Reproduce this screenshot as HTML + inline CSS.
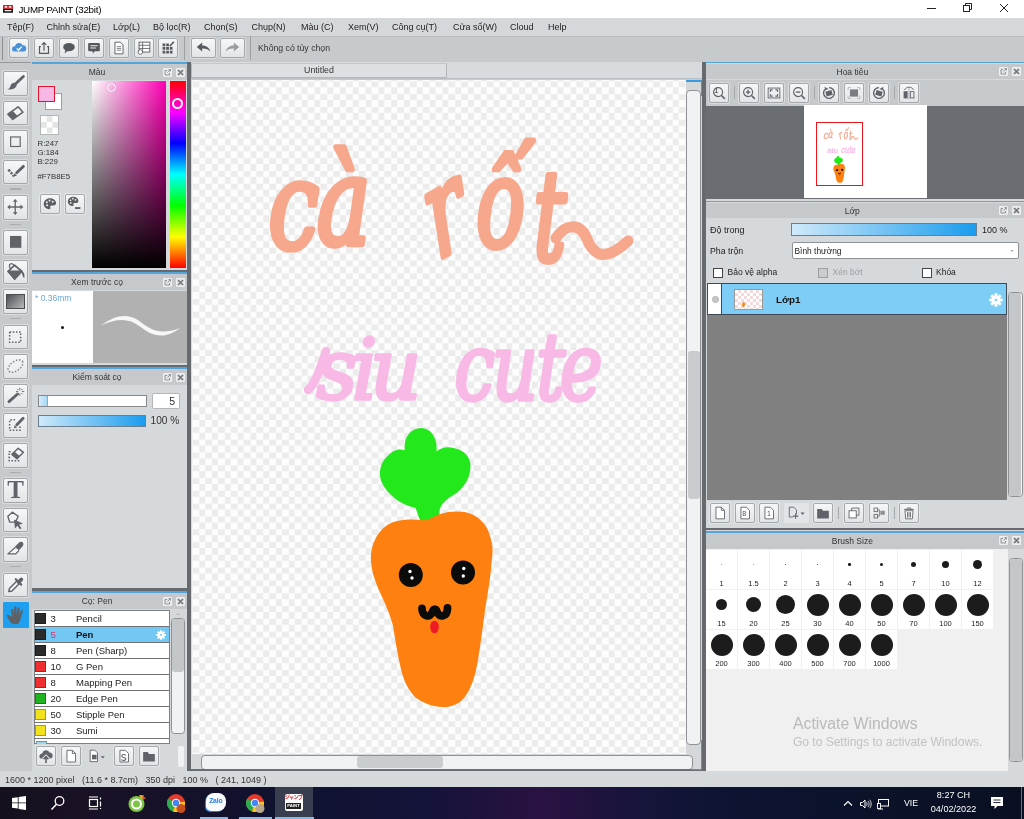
<!DOCTYPE html><html lang="vi"><head><meta charset="utf-8"><title>JUMP PAINT (32bit)</title><style>
*{box-sizing:border-box;margin:0;padding:0}
html,body{width:1024px;height:819px;overflow:hidden;background:#d5d9dc}
body{position:relative;font-family:"Liberation Sans","DejaVu Sans",sans-serif;font-size:9px;color:#222;line-height:1}
#app{position:absolute;left:0;top:0;width:1024px;height:819px;overflow:hidden;background:#d5d9dc;filter:blur(.45px);will-change:transform}
.a{position:absolute}
.t{position:absolute;white-space:nowrap}
.btn{position:absolute;border:1px solid #a4a8ab;border-radius:2px;background:linear-gradient(#f6f7f8,#e2e5e7);box-shadow:0 0 0 1px rgba(255,255,255,.35)}
.btn svg{position:absolute;left:0;top:0;width:100%;height:100%}
.hdr{position:absolute;background:#c5c9cc;height:15.800px}
.hdr .ttl{position:absolute;left:0;right:25px;top:4.300px;text-align:center;font-size:8.500px;color:#333}
.blue{position:absolute;height:1.800px;background:#52a6dc}
.dark{position:absolute;background:#666a6e}
.pi{position:absolute;width:9px;height:9px;border:1px solid #eef0f1;border-radius:1px;background:#e4e7e9}
.sb{position:absolute;border:1px solid #8f9294;border-radius:3.500px;background:#f1f2f3}
.th{position:absolute;border-radius:3px;background:#c3c7ca}
.cb{position:absolute;width:10px;height:10px;border:1.3px solid #444;background:#fff}
</style></head><body><div id="app">
<div class="a" style="left:0;top:0;width:1024px;height:18.400px;background:#fff"></div>
<svg class="a" style="left:3.200px;top:4.800px" width="10" height="7.800" viewBox="0 0 12 10" preserveAspectRatio="none"><rect x="0" y="0" width="12" height="5" fill="#d8202a"/><rect x="0" y="5" width="12" height="5" fill="#1a1a1a"/><rect x="2" y="1.5" width="3" height="2" fill="#fff"/><rect x="7" y="1.5" width="3" height="2" fill="#fff"/><rect x="2" y="6.5" width="8" height="1.5" fill="#fff"/></svg>
<div class="t" style="left:18.500px;top:4.600px;font-size:9.800px;letter-spacing:-.28px;color:#000">JUMP PAINT (32bit)</div>
<svg class="a" style="left:920px;top:-.8px" width="104" height="18" viewBox="0 0 104 18"><g stroke="#222" stroke-width="1" fill="none"><path d="M7 9.5h9"/><rect x="43.5" y="6.5" width="6" height="6"/><path d="M45.500 6.500v-2h6v6h-2"/><path d="M80 5l8 8M88 5l-8 8"/></g></svg>
<div class="a" style="left:0;top:18.400px;width:1024px;height:17.600px;background:#d4d8db"></div>
<div class="t" style="left:7px;top:23.300px;font-size:9px;color:#222">Tệp(F)</div>
<div class="t" style="left:46.6px;top:23.300px;font-size:9px;color:#222">Chỉnh sửa(E)</div>
<div class="t" style="left:113px;top:23.300px;font-size:9px;color:#222">Lớp(L)</div>
<div class="t" style="left:153px;top:23.300px;font-size:9px;color:#222">Bộ lọc(R)</div>
<div class="t" style="left:204px;top:23.300px;font-size:9px;color:#222">Chọn(S)</div>
<div class="t" style="left:251.5px;top:23.300px;font-size:9px;color:#222">Chụp(N)</div>
<div class="t" style="left:301px;top:23.300px;font-size:9px;color:#222">Màu (C)</div>
<div class="t" style="left:348px;top:23.300px;font-size:9px;color:#222">Xem(V)</div>
<div class="t" style="left:392px;top:23.300px;font-size:9px;color:#222">Công cụ(T)</div>
<div class="t" style="left:453px;top:23.300px;font-size:9px;color:#222">Cửa sổ(W)</div>
<div class="t" style="left:510px;top:23.300px;font-size:9px;color:#222">Cloud</div>
<div class="t" style="left:548px;top:23.300px;font-size:9px;color:#222">Help</div>
<div class="a" style="left:0;top:36px;width:1024px;height:26px;background:#c6cacd"></div>
<div class="a" style="left:0;top:36px;width:1024px;height:1px;background:#b9bdc0"></div>
<div class="a" style="left:1.500px;top:37px;width:1.200px;height:23px;background:#8a8e91"></div>
<div class="btn" style="left:9px;top:38px;width:20px;height:20px"><svg viewBox="0 0 20 20"><path d="M5 14a3 3 0 0 1 .5-6a4.500 4.500 0 0 1 8.500-1a3.500 3.500 0 0 1 1 7z" fill="#4a90d9"/><path d="M7.500 10.500l2 2l3.500-4" stroke="#fff" stroke-width="1.600" fill="none"/></svg></div>
<div class="btn" style="left:34px;top:38px;width:20px;height:20px"><svg viewBox="0 0 20 20"><path d="M6.500 8.500h-1.500v7.500h10v-7.500h-1.500" stroke="#555a5e" stroke-width="1.300" fill="none"/><path d="M10 13v-9M7.500 6.500l2.500-2.500l2.500 2.500" stroke="#555a5e" stroke-width="1.300" fill="none"/></svg></div>
<div class="btn" style="left:59px;top:38px;width:20px;height:20px"><svg viewBox="0 0 20 20"><ellipse cx="10" cy="9" rx="6.500" ry="4.500" fill="#555a5e"/><path d="M6 12l-1 4l4-3z" fill="#555a5e"/></svg></div>
<div class="btn" style="left:84px;top:38px;width:20px;height:20px"><svg viewBox="0 0 20 20"><rect x="3.500" y="4.500" width="13" height="9" rx="1" fill="#555a5e"/><path d="M6 7.500h8M6 10h6" stroke="#fff" stroke-width="1"/><path d="M8 13l1 3l2-3z" fill="#555a5e"/></svg></div>
<div class="btn" style="left:109px;top:38px;width:20px;height:20px"><svg viewBox="0 0 20 20"><path d="M5.500 3.500h6l3 3v10h-9z" fill="#fff" stroke="#555a5e" stroke-width="1"/><path d="M7.500 8.500h5M7.500 10.500h5M7.500 12.500h5" stroke="#555a5e" stroke-width=".8"/></svg></div>
<div class="btn" style="left:133.5px;top:38px;width:20px;height:20px"><svg viewBox="0 0 20 20"><rect x="4.500" y="3.500" width="12" height="11" fill="#fff" stroke="#555a5e" stroke-width="1"/><path d="M4.500 7h12M4.500 10.500h12M8.500 3.500v11" stroke="#555a5e" stroke-width=".9"/><circle cx="6" cy="14.500" r="2.500" fill="#fff" stroke="#555a5e" stroke-width=".9"/></svg></div>
<div class="btn" style="left:158px;top:38px;width:20px;height:20px"><svg viewBox="0 0 20 20"><path d="M4 5h3v3h-3zM8 5h3v3h-3zM4 9h3v3h-3zM8 9h3v3h-3zM12 9h3v3h-3zM4 13h3v3h-3zM8 13h3v3h-3zM12 13h3v3h-3z" fill="#555a5e"/><path d="M12 8l4.500-5" stroke="#555a5e" stroke-width="1.800"/></svg></div>
<div class="a" style="left:184px;top:36px;width:1px;height:24px;background:#9da1a4"></div>
<div class="btn" style="left:191px;top:38px;width:25px;height:20px"><svg viewBox="0 0 25 20"><path d="M5 9l6-5v3.200c5 0 8 2.500 9 7c-2-3-5-3.800-9-3.700v3.500z" fill="#555a5e"/></svg></div>
<div class="btn" style="left:220px;top:38px;width:25px;height:20px"><svg viewBox="0 0 25 20"><path d="M20 9l-6-5v3.200c-5 0-8 2.500-9 7c2-3 5-3.800 9-3.700v3.500z" fill="#9a9ea2"/></svg></div>
<div class="a" style="left:250px;top:36px;width:1px;height:24px;background:#9da1a4"></div>
<div class="t" style="left:258px;top:44.300px;font-size:8.700px;color:#333">Không có tùy chọn</div>
<div class="a" style="left:0;top:62px;width:32px;height:709px;background:#c6cacd"></div>
<div class="a" style="left:0;top:62.300px;width:30.500px;height:1.200px;background:#94989b"></div>
<div class="btn" style="left:3px;top:71.0px;width:25px;height:24.500px"><svg viewBox="0 0 25 25"><path d="M21.300 5l-9 8.300" stroke="#60646a" stroke-width="3.200" stroke-linecap="round"/><path d="M11 12l3 3c-1.500 3.500-6 5.200-10.500 4.200c2.500-1 3-2.200 3.500-4c.5-1.800 2-3 4-3.200z" fill="#60646a"/></svg></div>
<div class="btn" style="left:3px;top:100.6px;width:25px;height:24.500px"><svg viewBox="0 0 25 25"><path d="M4 13.500L15.500 5.300L20.800 11.300L9.500 19.300z" fill="#f3f4f5" stroke="#60646a" stroke-width="1.700" stroke-linejoin="round"/><path d="M4 13.500L9.300 9.700L14.800 15.500L9.500 19.300z" fill="#60646a"/></svg></div>
<div class="btn" style="left:3px;top:130.2px;width:25px;height:24.500px"><svg viewBox="0 0 25 25"><rect x="7.100" y="6.600" width="10.600" height="10.600" fill="#eceeef" stroke="#63676b" stroke-width="1.300"/></svg></div>
<div class="btn" style="left:3px;top:159.8px;width:25px;height:24.500px"><svg viewBox="0 0 25 25"><path d="M21.300 6l-7.500 7" stroke="#60646a" stroke-width="3.200" stroke-linecap="round"/><path d="M10.300 17.300l1-3.800l2.800 2.800z" fill="#60646a"/><path d="M3.500 10.500l2-2l2 2l-2 2zM6.300 13.500l1.800-1.800l1.800 1.800l-1.800 1.800zM8.500 16.500l1.500-1.500l1.500 1.500l-1.500 1.500z" fill="#60646a"/></svg></div>
<div class="btn" style="left:3px;top:195.0px;width:25px;height:24.500px"><svg viewBox="0 0 25 25"><path d="M12.200 5v14.500M5 12.200h14.500" stroke="#63676b" stroke-width="1.500"/><path d="M12.200 3.300l-2.700 3.200h5.400zM12.200 21.200l-2.700-3.200h5.400zM3.300 12.200l3.200-2.700v5.400zM21.200 12.200l-3.200-2.700v5.400z" fill="#63676b"/></svg></div>
<div class="btn" style="left:3px;top:230.2px;width:25px;height:24.500px"><svg viewBox="0 0 25 25"><rect x="6.400" y="5.500" width="12.600" height="13.200" fill="#606468"/></svg></div>
<div class="btn" style="left:3px;top:259.8px;width:25px;height:24.500px"><svg viewBox="0 0 25 25"><path d="M3.800 11.500L11.500 4.500L20 11.500L11.500 20.500z" fill="#60646a" stroke="#60646a" stroke-width="1.400" stroke-linejoin="round"/><path d="M6.300 10.500L11.500 6L17 10.500z" fill="#eceeef"/><path d="M7.500 9.500C3 3.500 8 .8 11.500 5.500" stroke="#60646a" stroke-width="1.400" fill="none"/><path d="M19.500 11c2.800 1.200 3.600 5 2.600 7.800c-1.500-1.200-2.400-4-2.600-7.800z" fill="#60646a"/></svg></div>
<div class="btn" style="left:3px;top:289.4px;width:25px;height:24.500px"><div class="a" style="left:2.300px;top:3.600px;width:18.600px;height:14.800px;border:1.200px solid #4a4d50;background:linear-gradient(135deg,#4c4f52,#b9bbbd)"></div></div>
<div class="btn" style="left:3px;top:324.6px;width:25px;height:24.500px"><svg viewBox="0 0 25 25"><rect x="6" y="6.600" width="12.200" height="11.400" fill="#eef0f1" stroke="#60646a" stroke-width="1.700" stroke-dasharray="1.700 1.800"/></svg></div>
<div class="btn" style="left:3px;top:354.2px;width:25px;height:24.500px"><svg viewBox="0 0 25 25"><ellipse cx="12.500" cy="12.300" rx="9.300" ry="5.300" transform="rotate(-35 12.500 12.300)" fill="#eef0f1" stroke="#878b8e" stroke-width="1.700" stroke-dasharray="1.700 1.800"/></svg></div>
<div class="btn" style="left:3px;top:383.8px;width:25px;height:24.500px"><svg viewBox="0 0 25 25"><path d="M5.300 18.500l9.500-8.500" stroke="#60646a" stroke-width="3.200" stroke-linecap="round"/><path d="M17.300 3v3M17.300 9.500v2.500M13 7.300h2.500M19.500 7.300h2.800M14.300 4.300l1.500 1.500M20.500 4.300l-1.500 1.500M20.300 10.300l-1.300-1.300" stroke="#6d7175" stroke-width="1.100"/></svg></div>
<div class="btn" style="left:3px;top:413.4px;width:25px;height:24.500px"><svg viewBox="0 0 25 25"><path d="M12 6.500h-6v11.500h11.500v-5" fill="none" stroke="#60646a" stroke-width="1.700" stroke-dasharray="1.700 1.800"/><path d="M21 4.800l-7 7.200" stroke="#60646a" stroke-width="3.200" stroke-linecap="round"/><path d="M10.800 15.800l.8-3.500l2.700 2.700z" fill="#60646a"/></svg></div>
<div class="btn" style="left:3px;top:443.0px;width:25px;height:24.500px"><svg viewBox="0 0 25 25"><path d="M7 8.500h-1.500v10h12" fill="none" stroke="#60646a" stroke-width="1.700" stroke-dasharray="1.700 1.800"/><path d="M8.500 11.500L15.500 4.800L21.300 9.300L14.300 16.500z" fill="#f3f4f5" stroke="#60646a" stroke-width="1.600" stroke-linejoin="round"/><path d="M8.500 11.500L11.500 8.600L17.300 13.400L14.300 16.500z" fill="#60646a"/></svg></div>
<div class="btn" style="left:3px;top:478.2px;width:25px;height:24.500px"><div class="t" style="left:0;width:23px;top:0px;text-align:center;font-family:'Liberation Serif',serif;font-weight:bold;font-size:25px;color:#60646a;line-height:22.500px">T</div></div>
<div class="btn" style="left:3px;top:507.8px;width:25px;height:24.500px"><svg viewBox="0 0 25 25"><path d="M9 3.500L4 8L6 14.500H12.500L15.500 8z" fill="#f3f4f5" stroke="#60646a" stroke-width="1.500" stroke-linejoin="round"/><path d="M10.800 11.800l10 4.300l-4.300 1.300l2.700 4l-1.800 1.200l-2.700-4l-2.800 3.200z" fill="#60646a"/></svg></div>
<div class="btn" style="left:3px;top:537.4px;width:25px;height:24.500px"><svg viewBox="0 0 25 25"><path d="M19.500 4.300c2 1 2.500 3 1 4.800l-4.500 4.700l-4.500-3.800l4.500-4.500c1.200-1.200 2.400-1.700 3.500-1.200z" fill="#60646a"/><path d="M12.300 10.500l-8.300 7.200h8.800l3.500-3.800" fill="#f3f4f5" stroke="#60646a" stroke-width="1.300" stroke-linejoin="round"/></svg></div>
<div class="btn" style="left:3px;top:572.6px;width:25px;height:24.500px"><svg viewBox="0 0 25 25"><path d="M5 19.500l.8-3.500l8.500-8.500l2.800 2.800l-8.500 8.500z" fill="#f3f4f5" stroke="#60646a" stroke-width="1.600" stroke-linejoin="round"/><path d="M12.800 5.800l6 6" stroke="#60646a" stroke-width="2.400" stroke-linecap="round"/><path d="M16 9l3-3" stroke="#60646a" stroke-width="4.200" stroke-linecap="round"/></svg></div>
<div class="a" style="left:2.500px;top:601.7px;width:26.500px;height:26px;background:#1e9ff0;border-radius:1px"><svg viewBox="0 0 25 25" style="position:absolute;left:1px;top:1px;width:24px;height:24px"><path d="M8.300 14.500l-.8-7c-.2-1.600 1.900-1.900 2.200-.3l.9 4.800l-.1-7.200c0-1.700 2.300-1.700 2.400 0l.3 7l.9-6.200c.3-1.600 2.400-1.300 2.200.3l-.6 6.600l1.900-4.300c.7-1.500 2.600-.7 2 .8l-2.300 6.500c-.4 4.300-2.300 6.700-5.800 6.700c-2.800 0-4.500-1.300-6-4l-2.300-4.200c-.8-1.500 1-2.500 2-1.200z" fill="#5e6165"/></svg></div>
<div class="a" style="left:10px;top:188.4px;width:11px;height:1.200px;background:#a9adb0"></div>
<div class="a" style="left:10px;top:223.6px;width:11px;height:1.200px;background:#a9adb0"></div>
<div class="a" style="left:10px;top:318.0px;width:11px;height:1.200px;background:#a9adb0"></div>
<div class="a" style="left:10px;top:471.6px;width:11px;height:1.200px;background:#a9adb0"></div>
<div class="a" style="left:10px;top:566.0px;width:11px;height:1.200px;background:#a9adb0"></div>
<div class="a" style="left:32px;top:62px;width:155px;height:709px;background:#d5d9dc"></div>
<div class="dark" style="left:187px;top:62px;width:3.600px;height:709px"></div>
<div class="blue" style="left:32px;top:62.0px;width:155px"></div>
<div class="hdr" style="left:32px;top:64.0px;width:155px"><div class="ttl">Màu</div><div class="pi" style="right:15.500px;top:3.500px"><svg viewBox="0 0 9 9" style="position:absolute;left:-1px;top:-1px;width:9px;height:9px"><path d="M4 2.500h-2v4.500h4.500v-2" fill="none" stroke="#8a8e91" stroke-width=".9"/><path d="M4.500 4.500l3-3M5.500 1.500h2v2" fill="none" stroke="#8a8e91" stroke-width=".9"/></svg></div><div class="pi" style="right:2.500px;top:3.500px"><svg viewBox="0 0 9 9" style="position:absolute;left:-1px;top:-1px;width:9px;height:9px"><path d="M2 2l5 5M7 2l-5 5" stroke="#777b7e" stroke-width="1.700"/></svg></div></div>
<div class="a" style="left:45px;top:93px;width:17px;height:16.500px;background:#fff;border:1px solid #9a9ea2"></div>
<div class="a" style="left:38px;top:85.500px;width:16.500px;height:16.500px;background:#f7b8e5;border:1.300px solid #e0142e"></div>
<div class="a" style="left:40px;top:115px;width:19px;height:19.500px;border:1px solid #b3b6b9;background:#fff"><svg viewBox="0 0 17 17" style="position:absolute;left:0;top:0;width:17px;height:17.500px"><path d="M5.700 0h5.700v5.700h-5.700zM0 5.700h5.700v5.700h-5.700zM11.300 5.700h5.700v5.700h-5.700zM5.700 11.300h5.700v5.700h-5.700z" fill="#e3e4e4"/></svg></div>
<div class="t" style="left:37.500px;top:140.3px;font-size:7.800px;color:#333">R:247</div>
<div class="t" style="left:37.500px;top:149.3px;font-size:7.800px;color:#333">G:184</div>
<div class="t" style="left:37.500px;top:158.3px;font-size:7.800px;color:#333">B:229</div>
<div class="t" style="left:37.500px;top:172.500px;font-size:7.800px;color:#333">#F7B8E5</div>
<div class="btn" style="left:40px;top:193.500px;width:20px;height:20px"><svg viewBox="0 0 20 20"><path d="M10 3.500c-4 0-7 2.800-7 6.200c0 3.500 3 6 6 6c1.500 0 1.800-1 1.300-2c-.5-1.200.2-2 1.500-2h2c2 0 3-1 3-2.700c0-3-3-5.500-6.800-5.500z" fill="#5b5f63"/><circle cx="6.500" cy="8" r="1.100" fill="#eee"/><circle cx="9.500" cy="6" r="1.100" fill="#eee"/><circle cx="13" cy="7.500" r="1.100" fill="#eee"/><circle cx="6.800" cy="11.500" r="1.100" fill="#eee"/></svg></div>
<div class="btn" style="left:64.500px;top:193.500px;width:20px;height:20px"><svg viewBox="0 0 20 20"><g transform="translate(-.5 -1) scale(.85)"><path d="M10 3.500c-4 0-7 2.800-7 6.200c0 3.500 3 6 6 6c1.500 0 1.800-1 1.300-2c-.5-1.200.2-2 1.500-2h2c2 0 3-1 3-2.700c0-3-3-5.500-6.800-5.500z" fill="#5b5f63"/><circle cx="6.500" cy="8" r="1.100" fill="#eee"/><circle cx="9.500" cy="6" r="1.100" fill="#eee"/><circle cx="13" cy="7.500" r="1.100" fill="#eee"/><circle cx="6.800" cy="11.500" r="1.100" fill="#eee"/></g><rect x="10" y="13.500" width="6" height="2" fill="#5b5f63"/></svg></div>
<div class="a" style="left:92px;top:80.500px;width:74px;height:187.500px;background:linear-gradient(to bottom,rgba(0,0,0,0),#000),linear-gradient(to right,#fff,#ff00b4)"></div>
<div class="a" style="left:106.500px;top:82.500px;width:9px;height:9px;border-radius:50%;border:1.600px solid #fff;box-shadow:0 0 1px rgba(0,0,0,.35)"></div>
<div class="a" style="left:170px;top:80.500px;width:15.500px;height:187.500px;background:linear-gradient(to bottom,#ff0000 0%,#ff00ff 16.6%,#0000ff 33.300%,#00ffff 50%,#00ff00 66.600%,#ffff00 83.300%,#ff0000 100%)"></div>
<div class="a" style="left:172.200px;top:97.500px;width:11px;height:11px;border-radius:50%;border:2px solid #fff"></div>
<div class="dark" style="left:32px;top:269.500px;width:155px;height:2.500px"></div>
<div class="blue" style="left:32px;top:272.0px;width:155px"></div>
<div class="hdr" style="left:32px;top:274.0px;width:155px"><div class="ttl">Xem trước cọ</div><div class="pi" style="right:15.500px;top:3.500px"><svg viewBox="0 0 9 9" style="position:absolute;left:-1px;top:-1px;width:9px;height:9px"><path d="M4 2.500h-2v4.500h4.500v-2" fill="none" stroke="#8a8e91" stroke-width=".9"/><path d="M4.500 4.500l3-3M5.500 1.500h2v2" fill="none" stroke="#8a8e91" stroke-width=".9"/></svg></div><div class="pi" style="right:2.500px;top:3.500px"><svg viewBox="0 0 9 9" style="position:absolute;left:-1px;top:-1px;width:9px;height:9px"><path d="M2 2l5 5M7 2l-5 5" stroke="#777b7e" stroke-width="1.700"/></svg></div></div>
<div class="a" style="left:32px;top:290.500px;width:61px;height:72px;background:#fff"></div>
<div class="a" style="left:93px;top:290.500px;width:94px;height:72px;background:#b1b1b1"></div>
<div class="t" style="left:35px;top:293.500px;font-size:8.500px;color:#6aa6d6">* 0.36mm</div>
<div class="a" style="left:60.800px;top:325.500px;width:3px;height:3px;border-radius:50%;background:#111"></div>
<svg class="a" style="left:93px;top:290.500px" width="94" height="72" viewBox="0 0 94 72"><path d="M8 34.500C22 24 34 22.500 44 28.500C55 36 64 46 87 37C70 50 58 44 47 35.500C36 27 24 27 8 34.500z" fill="#f7f7f7"/></svg>
<div class="dark" style="left:32px;top:364.500px;width:155px;height:2.500px"></div>
<div class="blue" style="left:32px;top:367.0px;width:155px"></div>
<div class="hdr" style="left:32px;top:369.0px;width:155px"><div class="ttl">Kiểm soát cọ</div><div class="pi" style="right:15.500px;top:3.500px"><svg viewBox="0 0 9 9" style="position:absolute;left:-1px;top:-1px;width:9px;height:9px"><path d="M4 2.500h-2v4.500h4.500v-2" fill="none" stroke="#8a8e91" stroke-width=".9"/><path d="M4.500 4.500l3-3M5.500 1.500h2v2" fill="none" stroke="#8a8e91" stroke-width=".9"/></svg></div><div class="pi" style="right:2.500px;top:3.500px"><svg viewBox="0 0 9 9" style="position:absolute;left:-1px;top:-1px;width:9px;height:9px"><path d="M2 2l5 5M7 2l-5 5" stroke="#777b7e" stroke-width="1.700"/></svg></div></div>
<div class="a" style="left:38px;top:394.500px;width:109px;height:12.500px;background:#fff;border:1px solid #85898c"><div class="a" style="left:0;top:0;width:8.500px;height:10.500px;background:linear-gradient(to right,#d6ecfb,#a8d6f5);border-right:1px solid #6db3e4"></div></div>
<div class="a" style="left:152px;top:392.500px;width:27.500px;height:16.500px;background:#fff;border:1px solid #b4b8bb;border-radius:2px"></div>
<div class="t" style="left:152px;width:23px;top:395.500px;text-align:right;font-size:10.500px;color:#333">5</div>
<div class="a" style="left:38px;top:414.500px;width:107.500px;height:12.500px;background:linear-gradient(to right,#cfe9fa,#1a9cee);border:1px solid #6a7f90"></div>
<div class="t" style="left:150.500px;top:415.500px;font-size:10.200px;color:#333">100 %</div>
<div class="dark" style="left:32px;top:588px;width:155px;height:2.500px"></div>
<div class="blue" style="left:32px;top:591.0px;width:155px"></div>
<div class="hdr" style="left:32px;top:593.0px;width:155px"><div class="ttl">Cọ: Pen</div><div class="pi" style="right:15.500px;top:3.500px"><svg viewBox="0 0 9 9" style="position:absolute;left:-1px;top:-1px;width:9px;height:9px"><path d="M4 2.500h-2v4.500h4.500v-2" fill="none" stroke="#8a8e91" stroke-width=".9"/><path d="M4.500 4.500l3-3M5.500 1.500h2v2" fill="none" stroke="#8a8e91" stroke-width=".9"/></svg></div><div class="pi" style="right:2.500px;top:3.500px"><svg viewBox="0 0 9 9" style="position:absolute;left:-1px;top:-1px;width:9px;height:9px"><path d="M2 2l5 5M7 2l-5 5" stroke="#777b7e" stroke-width="1.700"/></svg></div></div>
<div class="a" style="left:33.500px;top:610px;width:136px;height:134px;background:#fff;border:1px solid #7d8184;overflow:hidden"></div>
<div class="a" style="left:34.500px;top:626.0px;width:134px;height:1px;background:#6f7376"></div>
<div class="a" style="left:35px;top:613.0px;width:11px;height:11px;background:#2b2b2b;border:1px solid rgba(0,0,0,.3)"></div>
<div class="t" style="left:50.500px;top:613.8px;font-size:9.500px;color:#222">3</div>
<div class="t" style="left:76px;top:613.8px;font-size:9.500px;color:#222">Pencil</div>
<div class="a" style="left:34.500px;top:626.5px;width:134px;height:16px;background:#72c8f3"></div>
<div class="a" style="left:34.500px;top:642.0px;width:134px;height:1px;background:#6f7376"></div>
<div class="a" style="left:35px;top:629.0px;width:11px;height:11px;background:#2b2b2b;border:1px solid rgba(0,0,0,.3)"></div>
<div class="t" style="left:50.500px;top:629.8px;font-size:9.500px;color:#e0306a">5</div>
<div class="t" style="left:76px;top:629.8px;font-size:9.500px;font-weight:bold;color:#111">Pen</div>
<div class="a" style="left:34.500px;top:658.0px;width:134px;height:1px;background:#6f7376"></div>
<div class="a" style="left:35px;top:645.0px;width:11px;height:11px;background:#2b2b2b;border:1px solid rgba(0,0,0,.3)"></div>
<div class="t" style="left:50.500px;top:645.8px;font-size:9.500px;color:#222">8</div>
<div class="t" style="left:76px;top:645.8px;font-size:9.500px;color:#222">Pen (Sharp)</div>
<div class="a" style="left:34.500px;top:674.0px;width:134px;height:1px;background:#6f7376"></div>
<div class="a" style="left:35px;top:661.0px;width:11px;height:11px;background:#f03030;border:1px solid rgba(0,0,0,.3)"></div>
<div class="t" style="left:50.500px;top:661.8px;font-size:9.500px;color:#222">10</div>
<div class="t" style="left:76px;top:661.8px;font-size:9.500px;color:#222">G Pen</div>
<div class="a" style="left:34.500px;top:690.0px;width:134px;height:1px;background:#6f7376"></div>
<div class="a" style="left:35px;top:677.0px;width:11px;height:11px;background:#f03030;border:1px solid rgba(0,0,0,.3)"></div>
<div class="t" style="left:50.500px;top:677.8px;font-size:9.500px;color:#222">8</div>
<div class="t" style="left:76px;top:677.8px;font-size:9.500px;color:#222">Mapping Pen</div>
<div class="a" style="left:34.500px;top:706.0px;width:134px;height:1px;background:#6f7376"></div>
<div class="a" style="left:35px;top:693.0px;width:11px;height:11px;background:#1fb41f;border:1px solid rgba(0,0,0,.3)"></div>
<div class="t" style="left:50.500px;top:693.8px;font-size:9.500px;color:#222">20</div>
<div class="t" style="left:76px;top:693.8px;font-size:9.500px;color:#222">Edge Pen</div>
<div class="a" style="left:34.500px;top:722.0px;width:134px;height:1px;background:#6f7376"></div>
<div class="a" style="left:35px;top:709.0px;width:11px;height:11px;background:#f2e21e;border:1px solid rgba(0,0,0,.3)"></div>
<div class="t" style="left:50.500px;top:709.8px;font-size:9.500px;color:#222">50</div>
<div class="t" style="left:76px;top:709.8px;font-size:9.500px;color:#222">Stipple Pen</div>
<div class="a" style="left:34.500px;top:738.0px;width:134px;height:1px;background:#6f7376"></div>
<div class="a" style="left:35px;top:725.0px;width:11px;height:11px;background:#f2e21e;border:1px solid rgba(0,0,0,.3)"></div>
<div class="t" style="left:50.500px;top:725.8px;font-size:9.500px;color:#222">30</div>
<div class="t" style="left:76px;top:725.8px;font-size:9.500px;color:#222">Sumi</div>
<div class="a" style="left:35.500px;top:740.500px;width:11px;height:3px;background:#9fd8ea;border:1px solid rgba(0,0,0,.3);border-bottom:0"></div>
<svg class="a" style="left:156px;top:629.500px" width="10" height="10" viewBox="0 0 12 12"><g fill="#fff"><circle cx="6" cy="6" r="3.600"/><rect x="4.700" y="0.200" width="2.600" height="3.200" rx=".7" transform="rotate(0 6 6)"/><rect x="4.700" y="0.200" width="2.600" height="3.200" rx=".7" transform="rotate(45 6 6)"/><rect x="4.700" y="0.200" width="2.600" height="3.200" rx=".7" transform="rotate(90 6 6)"/><rect x="4.700" y="0.200" width="2.600" height="3.200" rx=".7" transform="rotate(135 6 6)"/><rect x="4.700" y="0.200" width="2.600" height="3.200" rx=".7" transform="rotate(180 6 6)"/><rect x="4.700" y="0.200" width="2.600" height="3.200" rx=".7" transform="rotate(225 6 6)"/><rect x="4.700" y="0.200" width="2.600" height="3.200" rx=".7" transform="rotate(270 6 6)"/><rect x="4.700" y="0.200" width="2.600" height="3.200" rx=".7" transform="rotate(315 6 6)"/></g><circle cx="6" cy="6" r="1.100" fill="#72c8f3"/></svg>
<div class="sb" style="left:170.500px;top:617.500px;width:14.500px;height:116px"></div>
<div class="th" style="left:171.500px;top:618.500px;width:12.500px;height:53px"></div>
<div class="a" style="left:175.500px;top:612.500px;width:0;height:0;border-left:2.200px solid transparent;border-right:2.200px solid transparent;border-bottom:2.800px solid #b9bdc0"></div>
<div class="btn" style="left:36px;top:746px;width:20px;height:20.300px;"><svg viewBox="0 0 20 20"><path d="M5.500 13a3 3 0 0 1 .3-6a4.200 4.200 0 0 1 8-1a3.200 3.200 0 0 1 .7 6.500z" fill="#60646a"/><path d="M10 17.500v-6.500M6.800 13.500l3.200-3.200l3.200 3.200" stroke="#e9ebec" stroke-width="3.600" fill="none"/><path d="M10 17.500v-6.500M7.300 13.300l2.700-2.800l2.700 2.800" stroke="#60646a" stroke-width="1.800" fill="none"/></svg></div>
<div class="btn" style="left:60.5px;top:746px;width:20px;height:20.300px;"><svg viewBox="0 0 20 20"><path d="M5.500 3.500h6l3.500 3.500v9.500h-9.500z" fill="#fff" stroke="#60646a" stroke-width="1"/><path d="M11.500 3.500v3.500h3.500" fill="none" stroke="#60646a" stroke-width="1"/></svg></div>
<div class="btn" style="left:85px;top:746px;width:25px;height:20.300px;border-color:transparent;background:none;box-shadow:none;"><svg viewBox="0 0 25 20"><path d="M4.500 3.500h5l3 3v9.500h-8z" fill="#fff" stroke="#60646a" stroke-width="1"/><rect x="6.500" y="8.500" width="5" height="5" fill="#60646a"/><path d="M16 10h4.500l-2.250 2.700z" fill="#60646a"/></svg></div>
<div class="btn" style="left:114px;top:746px;width:20px;height:20.300px;"><svg viewBox="0 0 20 20"><path d="M5.500 3.500h6l3.500 3.500v9.500h-9.500z" fill="#fff" stroke="#60646a" stroke-width="1"/><path d="M12 9c-2-1.500-4.500-.8-4.500 1s4.500 1 4.500 3s-3 2.300-5 .8" fill="none" stroke="#60646a" stroke-width="1.200"/></svg></div>
<div class="btn" style="left:138.5px;top:746px;width:20px;height:20.300px;"><svg viewBox="0 0 20 20"><path d="M3.500 5.500h5l1.500 2h6.500v8.500h-13z" fill="#60646a"/></svg></div>
<div class="a" style="left:177.500px;top:745.500px;width:6.500px;height:21px;background:#f1f2f3;border-radius:2px"></div>
<div class="a" style="left:190.600px;top:62px;width:511px;height:709px;background:#d7dbde"></div>
<div class="a" style="left:191px;top:62.500px;width:256px;height:15px;background:#dde0e3;border:1px solid #b4b8bb;border-top-color:#c5c8cb;border-radius:1px"></div>
<div class="t" style="left:191px;width:256px;top:66px;text-align:center;font-size:8.800px;color:#333">Untitled</div>
<div class="a" style="left:190.600px;top:77.500px;width:511px;height:2.500px;background:linear-gradient(#b4b8bc,#cdd1d4)"></div>
<div class="a" id="cv" style="left:191.600px;top:80.300px;width:494px;height:673.500px;background-color:#fdfdfd;background-image:conic-gradient(#ececec 25%,#fdfdfd 0 50%,#ececec 0 75%,#fdfdfd 0);background-size:12.800px 12.800px;background-position:0.400px -5.500px"></div>
<svg class="a" style="left:0;top:0" width="1024" height="819" viewBox="0 0 1024 819"><g font-family="'DejaVu Serif Condensed','DejaVu Serif',serif" font-style="italic" font-size="100" stroke-linejoin="round" stroke-linecap="round" style="paint-order:stroke">
<g fill="#f6a78c" stroke="#f6a78c"><text transform="scale(1.0 1.22)" x="268.5 317.0" y="203.1 199.8" stroke-width="5.2" vector-effect="non-scaling-stroke">cà</text> <text transform="scale(0.9 1.25)" x="486.2 529.2 592.7" y="208.0 197.6 208.0" rotate="-22 0 0" stroke-width="5.2" vector-effect="non-scaling-stroke">rốt</text></g>
<path d="M556 238C565 224 580 222 587 239S605 262 628 241" fill="none" stroke="#f6a78c" stroke-width="11"/>
<g fill="#f8b9e6" stroke="#f8b9e6"><text transform="scale(0.88 0.85)" x="359.8 400.0 420.7" y="469.4 469.4 469.4" stroke-width="3.4" vector-effect="non-scaling-stroke">siu</text> <text transform="scale(0.8 0.93)" x="568.2 614.6 670.4 700.1" y="430.1 430.1 430.6 430.6" stroke-width="3.4" vector-effect="non-scaling-stroke">cute</text></g>
<path d="M308 390C315 384 320 370 326 351" fill="none" stroke="#f8b9e6" stroke-width="8.5"/>
</g>
<path d="M421 522C418 516 417 511 415.500 508C402 505 388 496 381.500 482C378 472 380 460 393 451.500C397 449 401 449 405 450C403 440 409 428.500 421 428C432 428 438 440 436.500 451.500C442 447 448 446.500 453.500 448C464 450 471 457 470.500 467C470 480 462 490 453.500 495C448 498 443 502 440 508C439 513 439 518 440 523z" fill="#22e81c"/>
<path d="M371 561C370 545 378 530 389 524C399 519 412 519 421 520C428 521 434 516 440 514C449 511 457 511 465 512C478 515 487 524 490 536C493 545 493 552 492 558C491 575 488 592 485.500 607C483 625 481 642 478 660C475 678 470 693 461 701C455 706 448 707.500 442 707C432 706.500 423 703 415.500 697.500C408 690 403 679 400.500 667C397 652 395 638 393 625.500C389 611 383 599 378 588C374 578 371.500 570 371 561z" fill="#fd8010"/>
<circle cx="410.8" cy="575" r="12" fill="#0b0b0b"/>
<circle cx="463" cy="572.6" r="12" fill="#0b0b0b"/>
<circle cx="410" cy="571.5" r="1.700" fill="#fff"/>
<circle cx="412" cy="578" r="1.700" fill="#fff"/>
<circle cx="463.8" cy="568.5" r="1.700" fill="#fff"/>
<circle cx="463.3" cy="576" r="1.700" fill="#fff"/>
<path d="M422 608.500C422 617 430.500 618.500 432.500 611.500C433.500 609 436 609 437 611.500C439 618.500 447.500 617 447.500 608" fill="none" stroke="#0b0b0b" stroke-width="7.800" stroke-linecap="round" stroke-linejoin="round"/>
<ellipse cx="434.800" cy="609.500" rx="5" ry="4" fill="#0b0b0b"/>
<ellipse cx="434.500" cy="627" rx="4.300" ry="6.300" fill="#ee1d25"/></svg>
<div class="a" style="left:685.600px;top:80.300px;width:16px;height:690px;background:#d4d8db"></div>
<div class="a" style="left:191.600px;top:753.800px;width:510px;height:17px;background:#d4d8db"></div>
<div class="sb" style="left:686px;top:89.500px;width:15px;height:655px;border-radius:4px"></div>
<div class="th" style="left:687.500px;top:350.500px;width:12px;height:148px;background:#c9cdd0"></div>
<div class="sb" style="left:200.500px;top:754.500px;width:492px;height:15px;border-radius:4px"></div>
<div class="th" style="left:356.500px;top:756px;width:86px;height:12px;background:#c9cdd0"></div>
<div class="a" style="left:190.600px;top:769.300px;width:511px;height:1.500px;background:#6a6e72"></div>
<div class="a" style="left:686px;top:80.300px;width:16px;height:1.300px;background:#3a9be0"></div>
<div class="a" style="left:700.800px;top:80.300px;width:1.300px;height:16px;background:#3a9be0"></div>
<div class="a" style="left:700.800px;top:740px;width:1.300px;height:30px;background:#3a9be0"></div>
<div class="a" style="left:690px;top:768.500px;width:12px;height:1.300px;background:#3a9be0"></div>
<div class="dark" style="left:701.800px;top:62px;width:3.900px;height:709px"></div>
<div class="a" style="left:705.7px;top:62px;width:318.29999999999995px;height:709px;background:#d5d9dc"></div>
<div class="blue" style="left:705.7px;top:61.5px;width:318.29999999999995px"></div>
<div class="hdr" style="left:705.7px;top:63.5px;width:318.29999999999995px"><div class="ttl">Hoa tiêu</div><div class="pi" style="right:15.500px;top:3.500px"><svg viewBox="0 0 9 9" style="position:absolute;left:-1px;top:-1px;width:9px;height:9px"><path d="M4 2.500h-2v4.500h4.500v-2" fill="none" stroke="#8a8e91" stroke-width=".9"/><path d="M4.500 4.500l3-3M5.500 1.500h2v2" fill="none" stroke="#8a8e91" stroke-width=".9"/></svg></div><div class="pi" style="right:2.500px;top:3.500px"><svg viewBox="0 0 9 9" style="position:absolute;left:-1px;top:-1px;width:9px;height:9px"><path d="M2 2l5 5M7 2l-5 5" stroke="#777b7e" stroke-width="1.700"/></svg></div></div>
<div class="a" style="left:705.7px;top:80px;width:318.29999999999995px;height:25.500px;background:#c5c9cc"></div>
<div class="btn" style="left:708.7px;top:82.500px;width:20px;height:20px"><svg viewBox="0 0 20 20"><circle cx="9" cy="9" r="5" fill="none" stroke="#60646a" stroke-width="1.300"/><path d="M12.500 12.500l4 4" stroke="#60646a" stroke-width="1.800"/></svg></div>
<div class="btn" style="left:739px;top:82.500px;width:20px;height:20px"><svg viewBox="0 0 20 20"><circle cx="9" cy="9" r="5" fill="none" stroke="#60646a" stroke-width="1.300"/><path d="M12.500 12.500l4 4" stroke="#60646a" stroke-width="1.800"/><path d="M6.500 9h5M9 6.500v5" stroke="#60646a" stroke-width="1.500"/></svg></div>
<div class="btn" style="left:764px;top:82.500px;width:20px;height:20px"><svg viewBox="0 0 20 20"><rect x="3.500" y="4.500" width="13" height="11" fill="none" stroke="#60646a" stroke-width="1"/><path d="M6 9v-2.500h2.500M11.500 6.500h2.500v2.500M14 11v2.500h-2.500M8.500 13.500h-2.500v-2.500" fill="none" stroke="#60646a" stroke-width="1.200"/></svg></div>
<div class="btn" style="left:788.5px;top:82.500px;width:20px;height:20px"><svg viewBox="0 0 20 20"><circle cx="9" cy="9" r="5" fill="none" stroke="#60646a" stroke-width="1.300"/><path d="M12.500 12.500l4 4" stroke="#60646a" stroke-width="1.800"/><path d="M6.500 9h5" stroke="#60646a" stroke-width="1.500"/></svg></div>
<div class="btn" style="left:819px;top:82.500px;width:20px;height:20px"><svg viewBox="0 0 20 20"><path d="M6 5.500a6 6 0 1 0 4-1.500" fill="none" stroke="#60646a" stroke-width="1.500"/><path d="M5 3l1 4l3.500-1.500z" fill="#60646a"/><rect x="6.500" y="7.500" width="7" height="5.500" fill="#60646a" transform="rotate(-15 10 10)"/></svg></div>
<div class="btn" style="left:844px;top:82.500px;width:20px;height:20px"><svg viewBox="0 0 20 20"><rect x="5.500" y="6" width="9" height="8" fill="#7a7e82"/><path d="M3.500 7v-3h3M13.500 4h3v3M16.500 13v3h-3M6.500 16h-3v-3" fill="none" stroke="#b0b3b6" stroke-width="1"/></svg></div>
<div class="btn" style="left:869px;top:82.500px;width:20px;height:20px"><svg viewBox="0 0 20 20"><path d="M14 5.500a6 6 0 1 1-4-1.500" fill="none" stroke="#60646a" stroke-width="1.500"/><path d="M15 3l-1 4l-3.500-1.500z" fill="#60646a"/><rect x="6.500" y="7.500" width="7" height="5.500" fill="#60646a" transform="rotate(15 10 10)"/></svg></div>
<div class="btn" style="left:899px;top:82.500px;width:20px;height:20px"><svg viewBox="0 0 20 20"><rect x="4" y="8" width="4.500" height="8" fill="#60646a"/><rect x="11.500" y="8.500" width="4" height="7" fill="none" stroke="#60646a" stroke-width="1"/><path d="M10 5v12" stroke="#60646a" stroke-width=".8" stroke-dasharray="1.500 1"/><path d="M5 6.500c2-4 8-4 10 0" fill="none" stroke="#60646a" stroke-width="1.100"/></svg></div>
<div class="t" style="left:714.300px;top:87.300px;font-size:7px;font-weight:bold;color:#5b5f63">1</div>
<div class="a" style="left:733.7px;top:86px;width:1px;height:13px;background:#a4a8ab"></div>
<div class="a" style="left:813.7px;top:86px;width:1px;height:13px;background:#a4a8ab"></div>
<div class="a" style="left:894px;top:86px;width:1px;height:13px;background:#a4a8ab"></div>
<div class="a" style="left:705.7px;top:105.500px;width:318.29999999999995px;height:93.500px;background:#6a6e73"></div>
<div class="a" style="left:804px;top:105.200px;width:122.500px;height:93px;background:#fff"></div>
<svg class="a" style="left:0;top:0" width="1024" height="819" viewBox="0 0 1024 819"><g transform="translate(797.58 114.78) scale(0.0962)"><g font-family="'DejaVu Serif Condensed','DejaVu Serif',serif" font-style="italic" font-size="100" stroke-linejoin="round" stroke-linecap="round" style="paint-order:stroke">
<g fill="#f6a78c" stroke="#f6a78c"><text transform="scale(1.0 1.22)" x="268.5 317.0" y="203.1 199.8" stroke-width="0.3" vector-effect="non-scaling-stroke">cà</text> <text transform="scale(0.9 1.25)" x="486.2 529.2 592.7" y="208.0 197.6 208.0" rotate="-22 0 0" stroke-width="0.3" vector-effect="non-scaling-stroke">rốt</text></g>
<path d="M556 238C565 224 580 222 587 239S605 262 628 241" fill="none" stroke="#f6a78c" stroke-width="11"/>
<g fill="#f8b9e6" stroke="#f8b9e6"><text transform="scale(0.88 0.85)" x="359.8 400.0 420.7" y="469.4 469.4 469.4" stroke-width="0.25" vector-effect="non-scaling-stroke">siu</text> <text transform="scale(0.8 0.93)" x="568.2 614.6 670.4 700.1" y="430.1 430.1 430.6 430.6" stroke-width="0.25" vector-effect="non-scaling-stroke">cute</text></g>
<path d="M308 390C315 384 320 370 326 351" fill="none" stroke="#f8b9e6" stroke-width="9"/>
</g>
<path d="M421 522C418 516 417 511 415.500 508C402 505 388 496 381.500 482C378 472 380 460 393 451.500C397 449 401 449 405 450C403 440 409 428.500 421 428C432 428 438 440 436.500 451.500C442 447 448 446.500 453.500 448C464 450 471 457 470.500 467C470 480 462 490 453.500 495C448 498 443 502 440 508C439 513 439 518 440 523z" fill="#22e81c"/>
<path d="M371 561C370 545 378 530 389 524C399 519 412 519 421 520C428 521 434 516 440 514C449 511 457 511 465 512C478 515 487 524 490 536C493 545 493 552 492 558C491 575 488 592 485.500 607C483 625 481 642 478 660C475 678 470 693 461 701C455 706 448 707.500 442 707C432 706.500 423 703 415.500 697.500C408 690 403 679 400.500 667C397 652 395 638 393 625.500C389 611 383 599 378 588C374 578 371.500 570 371 561z" fill="#fd8010"/>
<circle cx="410.8" cy="575" r="12" fill="#0b0b0b"/>
<circle cx="463" cy="572.6" r="12" fill="#0b0b0b"/>
<circle cx="410" cy="571.5" r="1.700" fill="#fff"/>
<circle cx="412" cy="578" r="1.700" fill="#fff"/>
<circle cx="463.8" cy="568.5" r="1.700" fill="#fff"/>
<circle cx="463.3" cy="576" r="1.700" fill="#fff"/>
<path d="M422 608.500C422 617 430.500 618.500 432.500 611.500C433.500 609 436 609 437 611.500C439 618.500 447.500 617 447.500 608" fill="none" stroke="#0b0b0b" stroke-width="7.800" stroke-linecap="round" stroke-linejoin="round"/>
<ellipse cx="434.800" cy="609.500" rx="5" ry="4" fill="#0b0b0b"/>
<ellipse cx="434.500" cy="627" rx="4.300" ry="6.300" fill="#ee1d25"/></g></svg>
<div class="a" style="left:816px;top:122.200px;width:47.200px;height:63.800px;border:1.700px solid #ee1418"></div>
<div class="blue" style="left:705.7px;top:200.7px;width:318.29999999999995px"></div>
<div class="hdr" style="left:705.7px;top:202.7px;width:318.29999999999995px"><div class="ttl">Lớp</div><div class="pi" style="right:15.500px;top:3.500px"><svg viewBox="0 0 9 9" style="position:absolute;left:-1px;top:-1px;width:9px;height:9px"><path d="M4 2.500h-2v4.500h4.500v-2" fill="none" stroke="#8a8e91" stroke-width=".9"/><path d="M4.500 4.500l3-3M5.500 1.500h2v2" fill="none" stroke="#8a8e91" stroke-width=".9"/></svg></div><div class="pi" style="right:2.500px;top:3.500px"><svg viewBox="0 0 9 9" style="position:absolute;left:-1px;top:-1px;width:9px;height:9px"><path d="M2 2l5 5M7 2l-5 5" stroke="#777b7e" stroke-width="1.700"/></svg></div></div>
<div class="t" style="left:710px;top:226px;font-size:9px;color:#222">Độ trong</div>
<div class="a" style="left:790.500px;top:223px;width:186.500px;height:13px;background:linear-gradient(to right,#cfe9fa,#1a9cee);border:1px solid #6a7f90"></div>
<div class="t" style="left:982px;top:226px;font-size:9px;color:#222">100 %</div>
<div class="t" style="left:710px;top:246.500px;font-size:8.800px;color:#222">Pha trộn</div>
<div class="a" style="left:791.500px;top:241.500px;width:227px;height:17.500px;background:#fff;border:1px solid #8e9295;border-radius:2px"></div>
<div class="t" style="left:794.500px;top:246.800px;font-size:8.400px;color:#222">Bình thường</div>
<div class="a" style="left:1009.500px;top:249.500px;width:0;height:0;border-left:2.500px solid transparent;border-right:2.500px solid transparent;border-top:2.500px solid #b0b4b7"></div>
<div class="cb" style="left:713px;top:267.500px"></div><div class="t" style="left:727.500px;top:268.300px;font-size:8.500px;color:#222">Bảo vệ alpha</div>
<div class="cb" style="left:818px;top:267.500px;border-color:#9a9ea1;background:#c9cdd0"></div><div class="t" style="left:832.500px;top:268.300px;font-size:8.500px;color:#9a9ea1">Xén bớt</div>
<div class="cb" style="left:922px;top:267.500px"></div><div class="t" style="left:936px;top:268.300px;font-size:8.500px;color:#222">Khóa</div>
<div class="a" style="left:707px;top:283.500px;width:299.500px;height:216px;background:#808080"></div>
<div class="a" style="left:707px;top:283px;width:299.500px;height:32px;background:#7dcdf6;border:1px solid #3d4a55"></div>
<div class="a" style="left:708px;top:284px;width:14px;height:30px;background:#fff;border-right:1px solid #3d4a55"></div>
<div class="a" style="left:711.500px;top:296px;width:7px;height:7px;border-radius:50%;background:#c8c8c8;border:1px solid #b0b0b0"></div>
<div class="a" style="left:734px;top:288.500px;width:29px;height:21.500px;border:1px solid #9a9a9a;background-color:#fff;background-image:conic-gradient(#f3d9d9 25%,#fff 0 50%,#f3d9d9 0 75%,#fff 0);background-size:6px 6px"><div class="a" style="left:7px;top:12px;width:3px;height:5px;border-radius:50%;background:#f08a18"></div></div>
<div class="t" style="left:776px;top:294.800px;font-size:9.800px;font-weight:bold;color:#111">Lớp1</div>
<svg class="a" style="left:988.500px;top:293px" width="14" height="14" viewBox="0 0 12 12"><g fill="#fff"><circle cx="6" cy="6" r="3.600"/><rect x="4.700" y="0.200" width="2.600" height="3.200" rx=".7" transform="rotate(0 6 6)"/><rect x="4.700" y="0.200" width="2.600" height="3.200" rx=".7" transform="rotate(45 6 6)"/><rect x="4.700" y="0.200" width="2.600" height="3.200" rx=".7" transform="rotate(90 6 6)"/><rect x="4.700" y="0.200" width="2.600" height="3.200" rx=".7" transform="rotate(135 6 6)"/><rect x="4.700" y="0.200" width="2.600" height="3.200" rx=".7" transform="rotate(180 6 6)"/><rect x="4.700" y="0.200" width="2.600" height="3.200" rx=".7" transform="rotate(225 6 6)"/><rect x="4.700" y="0.200" width="2.600" height="3.200" rx=".7" transform="rotate(270 6 6)"/><rect x="4.700" y="0.200" width="2.600" height="3.200" rx=".7" transform="rotate(315 6 6)"/></g><circle cx="6" cy="6" r="1.100" fill="#7dcdf6"/></svg>
<div class="sb" style="left:1007.500px;top:291.500px;width:15px;height:205px"></div>
<div class="th" style="left:1008.500px;top:292.500px;width:12.500px;height:203px;background:#c3c7ca"></div>
<div class="btn" style="left:709.5px;top:503px;width:20px;height:20px;"><svg viewBox="0 0 20 20"><path d="M5.500 3.500h6l3.500 3.500v9.500h-9.500z" fill="#fff" stroke="#60646a" stroke-width="1"/><path d="M11.500 3.500v3.500h3.500" fill="none" stroke="#60646a" stroke-width="1"/></svg></div>
<div class="btn" style="left:734.5px;top:503px;width:20px;height:20px;"><svg viewBox="0 0 20 20"><path d="M5.500 3.500h6l3.500 3.500v9.500h-9.500z" fill="#fff" stroke="#60646a" stroke-width="1"/></svg></div>
<div class="btn" style="left:759px;top:503px;width:20px;height:20px;"><svg viewBox="0 0 20 20"><path d="M5.500 3.500h6l3.500 3.500v9.500h-9.500z" fill="#fff" stroke="#60646a" stroke-width="1"/></svg></div>
<div class="btn" style="left:784px;top:503px;width:25px;height:20px;border-color:transparent;background:rgba(255,255,255,.32);box-shadow:none;"><svg viewBox="0 0 25 20"><path d="M4.500 3.500h5l3 3v5M4.500 3.500v11h4" fill="none" stroke="#60646a" stroke-width="1"/><path d="M8.500 13.500h6M11.500 10.500v6" stroke="#60646a" stroke-width="1.200"/><path d="M17 9.500h4.500l-2.250 2.700z" fill="#60646a"/></svg></div>
<div class="btn" style="left:813px;top:503px;width:20px;height:20px;"><svg viewBox="0 0 20 20"><path d="M3.500 5.500h5l1.500 2h6.500v8.500h-13z" fill="#60646a"/></svg></div>
<div class="btn" style="left:843.5px;top:503px;width:20px;height:20px;"><svg viewBox="0 0 20 20"><rect x="4.500" y="7.500" width="8" height="8" fill="#fff" stroke="#60646a" stroke-width="1"/><path d="M7.500 7.500v-3h8v8h-3" fill="none" stroke="#60646a" stroke-width="1"/></svg></div>
<div class="btn" style="left:868.5px;top:503px;width:20px;height:20px;"><svg viewBox="0 0 20 20"><rect x="4.500" y="4.500" width="4" height="4" fill="none" stroke="#60646a" stroke-width=".9"/><rect x="4.500" y="11.500" width="4" height="4" fill="none" stroke="#60646a" stroke-width=".9"/><rect x="11.500" y="7.500" width="5" height="4.500" fill="#8d9194"/><path d="M8.500 6.500h2v7h-2" fill="none" stroke="#60646a" stroke-width=".8"/></svg></div>
<div class="btn" style="left:898.5px;top:503px;width:20px;height:20px;"><svg viewBox="0 0 20 20"><path d="M5.500 7.500h9l-.8 9h-7.400z" fill="#fff" stroke="#60646a" stroke-width="1"/><path d="M4.500 6h11M8 6v-1.500h4v1.500M8.300 9v6M10 9v6M11.700 9v6" stroke="#60646a" stroke-width="1" fill="none"/></svg></div>
<div class="t" style="left:742.300px;top:509.500px;font-size:7px;color:#4a4e52">8</div>
<div class="t" style="left:767px;top:509.500px;font-size:7px;color:#4a4e52">1</div>
<div class="a" style="left:838px;top:507px;width:1px;height:12px;background:#a4a8ab"></div>
<div class="a" style="left:893.5px;top:507px;width:1px;height:12px;background:#a4a8ab"></div>
<div class="dark" style="left:705.7px;top:527.500px;width:318.29999999999995px;height:2.500px"></div>
<div class="blue" style="left:705.7px;top:530.9px;width:318.29999999999995px"></div>
<div class="hdr" style="left:705.7px;top:532.9px;width:318.29999999999995px"><div class="ttl">Brush Size</div><div class="pi" style="right:15.500px;top:3.500px"><svg viewBox="0 0 9 9" style="position:absolute;left:-1px;top:-1px;width:9px;height:9px"><path d="M4 2.500h-2v4.500h4.500v-2" fill="none" stroke="#8a8e91" stroke-width=".9"/><path d="M4.500 4.500l3-3M5.500 1.500h2v2" fill="none" stroke="#8a8e91" stroke-width=".9"/></svg></div><div class="pi" style="right:2.500px;top:3.500px"><svg viewBox="0 0 9 9" style="position:absolute;left:-1px;top:-1px;width:9px;height:9px"><path d="M2 2l5 5M7 2l-5 5" stroke="#777b7e" stroke-width="1.700"/></svg></div></div>
<div class="a" style="left:706px;top:549px;width:301.500px;height:221.500px;background:#f0f0f0"></div>
<div class="a" style="left:706.0px;top:549.5px;width:31px;height:39px;background:#fff"></div>
<div class="a" style="left:721.35px;top:564.35px;width:0.3px;height:0.3px;border-radius:50%;background:#999"></div>
<div class="t" style="left:706.0px;width:31px;top:579.5px;text-align:center;font-size:7.500px;color:#222">1</div>
<div class="a" style="left:738.0px;top:549.5px;width:31px;height:39px;background:#fff"></div>
<div class="a" style="left:753.20px;top:564.20px;width:0.6px;height:0.6px;border-radius:50%;background:#999"></div>
<div class="t" style="left:738.0px;width:31px;top:579.5px;text-align:center;font-size:7.500px;color:#222">1.5</div>
<div class="a" style="left:770.0px;top:549.5px;width:31px;height:39px;background:#fff"></div>
<div class="a" style="left:785.00px;top:564.00px;width:1px;height:1px;border-radius:50%;background:#1c1c1c"></div>
<div class="t" style="left:770.0px;width:31px;top:579.5px;text-align:center;font-size:7.500px;color:#222">2</div>
<div class="a" style="left:802.0px;top:549.5px;width:31px;height:39px;background:#fff"></div>
<div class="a" style="left:816.75px;top:563.75px;width:1.5px;height:1.5px;border-radius:50%;background:#1c1c1c"></div>
<div class="t" style="left:802.0px;width:31px;top:579.5px;text-align:center;font-size:7.500px;color:#222">3</div>
<div class="a" style="left:834.0px;top:549.5px;width:31px;height:39px;background:#fff"></div>
<div class="a" style="left:848.25px;top:563.25px;width:2.5px;height:2.5px;border-radius:50%;background:#1c1c1c"></div>
<div class="t" style="left:834.0px;width:31px;top:579.5px;text-align:center;font-size:7.500px;color:#222">4</div>
<div class="a" style="left:866.0px;top:549.5px;width:31px;height:39px;background:#fff"></div>
<div class="a" style="left:880.00px;top:563.00px;width:3px;height:3px;border-radius:50%;background:#1c1c1c"></div>
<div class="t" style="left:866.0px;width:31px;top:579.5px;text-align:center;font-size:7.500px;color:#222">5</div>
<div class="a" style="left:898.0px;top:549.5px;width:31px;height:39px;background:#fff"></div>
<div class="a" style="left:911.00px;top:562.00px;width:5px;height:5px;border-radius:50%;background:#1c1c1c"></div>
<div class="t" style="left:898.0px;width:31px;top:579.5px;text-align:center;font-size:7.500px;color:#222">7</div>
<div class="a" style="left:930.0px;top:549.5px;width:31px;height:39px;background:#fff"></div>
<div class="a" style="left:941.75px;top:560.75px;width:7.5px;height:7.5px;border-radius:50%;background:#1c1c1c"></div>
<div class="t" style="left:930.0px;width:31px;top:579.5px;text-align:center;font-size:7.500px;color:#222">10</div>
<div class="a" style="left:962.0px;top:549.5px;width:31px;height:39px;background:#fff"></div>
<div class="a" style="left:973.00px;top:560.00px;width:9px;height:9px;border-radius:50%;background:#1c1c1c"></div>
<div class="t" style="left:962.0px;width:31px;top:579.5px;text-align:center;font-size:7.500px;color:#222">12</div>
<div class="a" style="left:706.0px;top:589.5px;width:31px;height:39px;background:#fff"></div>
<div class="a" style="left:715.75px;top:598.75px;width:11.5px;height:11.5px;border-radius:50%;background:#1c1c1c"></div>
<div class="t" style="left:706.0px;width:31px;top:619.5px;text-align:center;font-size:7.500px;color:#222">15</div>
<div class="a" style="left:738.0px;top:589.5px;width:31px;height:39px;background:#fff"></div>
<div class="a" style="left:746.00px;top:597.00px;width:15px;height:15px;border-radius:50%;background:#1c1c1c"></div>
<div class="t" style="left:738.0px;width:31px;top:619.5px;text-align:center;font-size:7.500px;color:#222">20</div>
<div class="a" style="left:770.0px;top:589.5px;width:31px;height:39px;background:#fff"></div>
<div class="a" style="left:776.00px;top:595.00px;width:19px;height:19px;border-radius:50%;background:#1c1c1c"></div>
<div class="t" style="left:770.0px;width:31px;top:619.5px;text-align:center;font-size:7.500px;color:#222">25</div>
<div class="a" style="left:802.0px;top:589.5px;width:31px;height:39px;background:#fff"></div>
<div class="a" style="left:806.50px;top:593.50px;width:22px;height:22px;border-radius:50%;background:#1c1c1c"></div>
<div class="t" style="left:802.0px;width:31px;top:619.5px;text-align:center;font-size:7.500px;color:#222">30</div>
<div class="a" style="left:834.0px;top:589.5px;width:31px;height:39px;background:#fff"></div>
<div class="a" style="left:838.50px;top:593.50px;width:22px;height:22px;border-radius:50%;background:#1c1c1c"></div>
<div class="t" style="left:834.0px;width:31px;top:619.5px;text-align:center;font-size:7.500px;color:#222">40</div>
<div class="a" style="left:866.0px;top:589.5px;width:31px;height:39px;background:#fff"></div>
<div class="a" style="left:870.50px;top:593.50px;width:22px;height:22px;border-radius:50%;background:#1c1c1c"></div>
<div class="t" style="left:866.0px;width:31px;top:619.5px;text-align:center;font-size:7.500px;color:#222">50</div>
<div class="a" style="left:898.0px;top:589.5px;width:31px;height:39px;background:#fff"></div>
<div class="a" style="left:902.50px;top:593.50px;width:22px;height:22px;border-radius:50%;background:#1c1c1c"></div>
<div class="t" style="left:898.0px;width:31px;top:619.5px;text-align:center;font-size:7.500px;color:#222">70</div>
<div class="a" style="left:930.0px;top:589.5px;width:31px;height:39px;background:#fff"></div>
<div class="a" style="left:934.50px;top:593.50px;width:22px;height:22px;border-radius:50%;background:#1c1c1c"></div>
<div class="t" style="left:930.0px;width:31px;top:619.5px;text-align:center;font-size:7.500px;color:#222">100</div>
<div class="a" style="left:962.0px;top:589.5px;width:31px;height:39px;background:#fff"></div>
<div class="a" style="left:966.50px;top:593.50px;width:22px;height:22px;border-radius:50%;background:#1c1c1c"></div>
<div class="t" style="left:962.0px;width:31px;top:619.5px;text-align:center;font-size:7.500px;color:#222">150</div>
<div class="a" style="left:706.0px;top:629.5px;width:31px;height:39px;background:#fff"></div>
<div class="a" style="left:710.50px;top:633.50px;width:22px;height:22px;border-radius:50%;background:#1c1c1c"></div>
<div class="t" style="left:706.0px;width:31px;top:659.5px;text-align:center;font-size:7.500px;color:#222">200</div>
<div class="a" style="left:738.0px;top:629.5px;width:31px;height:39px;background:#fff"></div>
<div class="a" style="left:742.50px;top:633.50px;width:22px;height:22px;border-radius:50%;background:#1c1c1c"></div>
<div class="t" style="left:738.0px;width:31px;top:659.5px;text-align:center;font-size:7.500px;color:#222">300</div>
<div class="a" style="left:770.0px;top:629.5px;width:31px;height:39px;background:#fff"></div>
<div class="a" style="left:774.50px;top:633.50px;width:22px;height:22px;border-radius:50%;background:#1c1c1c"></div>
<div class="t" style="left:770.0px;width:31px;top:659.5px;text-align:center;font-size:7.500px;color:#222">400</div>
<div class="a" style="left:802.0px;top:629.5px;width:31px;height:39px;background:#fff"></div>
<div class="a" style="left:806.50px;top:633.50px;width:22px;height:22px;border-radius:50%;background:#1c1c1c"></div>
<div class="t" style="left:802.0px;width:31px;top:659.5px;text-align:center;font-size:7.500px;color:#222">500</div>
<div class="a" style="left:834.0px;top:629.5px;width:31px;height:39px;background:#fff"></div>
<div class="a" style="left:838.50px;top:633.50px;width:22px;height:22px;border-radius:50%;background:#1c1c1c"></div>
<div class="t" style="left:834.0px;width:31px;top:659.5px;text-align:center;font-size:7.500px;color:#222">700</div>
<div class="a" style="left:866.0px;top:629.5px;width:31px;height:39px;background:#fff"></div>
<div class="a" style="left:870.50px;top:633.50px;width:22px;height:22px;border-radius:50%;background:#1c1c1c"></div>
<div class="t" style="left:866.0px;width:31px;top:659.5px;text-align:center;font-size:7.500px;color:#222">1000</div>
<div class="sb" style="left:1008.500px;top:557.500px;width:14.500px;height:204px"></div>
<div class="th" style="left:1009.500px;top:558.500px;width:12px;height:202px;background:#c3c7ca"></div>
<div class="t" style="left:793px;top:716px;font-size:15.800px;color:#b9b9b9">Activate Windows</div>
<div class="t" style="left:793px;top:736.200px;font-size:12px;color:#c2c2c2">Go to Settings to activate Windows.</div>
<div class="a" style="left:0;top:770.800px;width:1024px;height:16.500px;background:#d5d9dc"></div>
<div class="t" style="left:5px;top:775.700px;font-size:9px;color:#333;word-spacing:0px">1600 * 1200 pixel&nbsp;&nbsp; (11.6 * 8.7cm)&nbsp;&nbsp; 350 dpi&nbsp;&nbsp; 100 %&nbsp;&nbsp; ( 241, 1049 )</div>
<div class="a" style="left:0;top:787px;width:1024px;height:32px;background:linear-gradient(to right,#15101d 0%,#1a1126 9%,#0f1230 29%,#15133a 42%,#2a1242 53%,#17143b 62%,#0c1431 72%,#0a1022 100%)"></div>
<svg class="a" style="left:12px;top:796px" width="14" height="14" viewBox="0 0 14 14"><path d="M0 2l5.800-.8v5.300h-5.800zM6.600 1.100l7.400-1.100v6.500h-7.400zM0 7.300h5.800v5.300l-5.800-.8zM6.600 7.300h7.400v6.700l-7.400-1.100z" fill="#fff"/></svg>
<svg class="a" style="left:50px;top:795px" width="16" height="16" viewBox="0 0 16 16"><circle cx="9.500" cy="6" r="4.300" fill="none" stroke="#fff" stroke-width="1.300"/><path d="M6.500 9.200l-5 5.300" stroke="#fff" stroke-width="1.500"/></svg>
<svg class="a" style="left:87px;top:796px" width="16" height="14" viewBox="0 0 16 14"><rect x="2.500" y="3.500" width="8" height="7" fill="none" stroke="#fff" stroke-width="1.200"/><path d="M2 1h9M2 13h9M13.500 1.500v2M13.500 5.500v5M13.500 12v1" stroke="#fff" stroke-width="1.200"/></svg>
<svg class="a" style="left:127px;top:793px" width="20" height="20" viewBox="0 0 20 20"><circle cx="9.500" cy="11" r="8" fill="#7cc443"/><circle cx="9.500" cy="11" r="4.500" fill="none" stroke="#fff" stroke-width="2"/><path d="M12 2l5 .5l-2 4z" fill="#f0c020"/><path d="M15 3l4 2l-3 2z" fill="#e4572e"/></svg>
<svg class="a" style="left:166px;top:793px" width="21" height="21" viewBox="0 0 21 21"><circle cx="10" cy="10" r="9" fill="#e33b2e"/><path d="M10 10L2.200 5.500A9 9 0 0 0 7 18.500z" fill="#2da94f"/><path d="M10 10L7 18.500A9 9 0 0 0 18.900 8.500z" fill="#fcc31e"/><circle cx="10" cy="10" r="4.200" fill="#fff"/><circle cx="10" cy="10" r="3.200" fill="#4285f4"/><circle cx="15" cy="15.500" r="4.500" fill="#c8501e"/></svg>
<div class="a" style="left:205.500px;top:792.500px;width:20.500px;height:18.500px;border-radius:8px 8px 8px 5px;background:#fbfcfe;box-shadow:-1px 1px 0 0 #2f7fe6"></div><div class="t" style="left:205.500px;width:20.500px;top:798px;text-align:center;font-size:6.800px;font-weight:bold;color:#2f7fe6;letter-spacing:-.2px">Zalo</div>
<svg class="a" style="left:245px;top:793px" width="21" height="21" viewBox="0 0 21 21"><circle cx="10" cy="10" r="9" fill="#e33b2e"/><path d="M10 10L2.200 5.500A9 9 0 0 0 7 18.500z" fill="#2da94f"/><path d="M10 10L7 18.500A9 9 0 0 0 18.900 8.500z" fill="#fcc31e"/><circle cx="10" cy="10" r="4.200" fill="#fff"/><circle cx="10" cy="10" r="3.200" fill="#4285f4"/><circle cx="15" cy="15.500" r="4.500" fill="#b9a58c"/></svg>
<div class="a" style="left:274.500px;top:787px;width:38.500px;height:32px;background:#393d50"></div>
<div class="a" style="left:284.500px;top:793.500px;width:18px;height:17.500px;border-radius:2px;background:#fbfbfb"></div><div class="t" style="left:284.500px;width:18px;top:795.300px;text-align:center;font-family:'Liberation Sans','Noto Sans CJK JP',sans-serif;font-size:5.200px;font-weight:bold;color:#e01822;letter-spacing:-.75px">ジャンプ</div><div class="a" style="left:286px;top:802.800px;width:15px;height:5.800px;background:#222"></div><div class="t" style="left:286px;width:15px;top:803.600px;text-align:center;font-size:4.300px;font-weight:bold;color:#fff">PAINT</div>
<div class="a" style="left:199.5px;top:817.400px;width:28px;height:1.600px;background:#86b9e6"></div>
<div class="a" style="left:239px;top:817.400px;width:33px;height:1.600px;background:#86b9e6"></div>
<div class="a" style="left:275px;top:817.400px;width:38.5px;height:1.600px;background:#86b9e6"></div>
<svg class="a" style="left:842px;top:797px" width="50" height="14" viewBox="0 0 50 14"><path d="M2 8.500l4-4l4 4" fill="none" stroke="#fff" stroke-width="1.100"/><path d="M18.500 5.500h2l2.500-2.500v8l-2.500-2.500h-2z" fill="none" stroke="#fff" stroke-width="1"/><path d="M24.500 5.200c.8 1 .8 2.600 0 3.600M26 4c1.500 1.800 1.500 4.200 0 6M27.600 2.800c2.100 2.500 2.100 5.900 0 8.400" fill="none" stroke="#fff" stroke-width=".8"/><rect x="36.500" y="2.500" width="10" height="6.500" fill="none" stroke="#fff" stroke-width="1"/><path d="M36 12h5M38.500 9v3" stroke="#fff" stroke-width="1"/><rect x="35.500" y="6.500" width="3" height="5" fill="#10142c" stroke="#fff" stroke-width=".9"/></svg>
<div class="t" style="left:904px;top:799px;font-size:8.800px;color:#fff">VIE</div>
<div class="t" style="left:927.500px;width:52px;top:791px;text-align:center;font-size:9.100px;color:#fff">8:27 CH</div>
<div class="t" style="left:927.500px;width:52px;top:805px;text-align:center;font-size:9.100px;color:#fff">04/02/2022</div>
<svg class="a" style="left:990px;top:796px" width="14" height="14" viewBox="0 0 14 14"><path d="M1 1h12v9h-5.500l-3 3v-3h-3.500z" fill="#fff"/><path d="M3.500 4h7M3.500 6.500h7" stroke="#10142c" stroke-width=".9"/></svg>
<div class="a" style="left:1020.500px;top:787px;width:1px;height:32px;background:#6a6f80"></div>
</div></body></html>
